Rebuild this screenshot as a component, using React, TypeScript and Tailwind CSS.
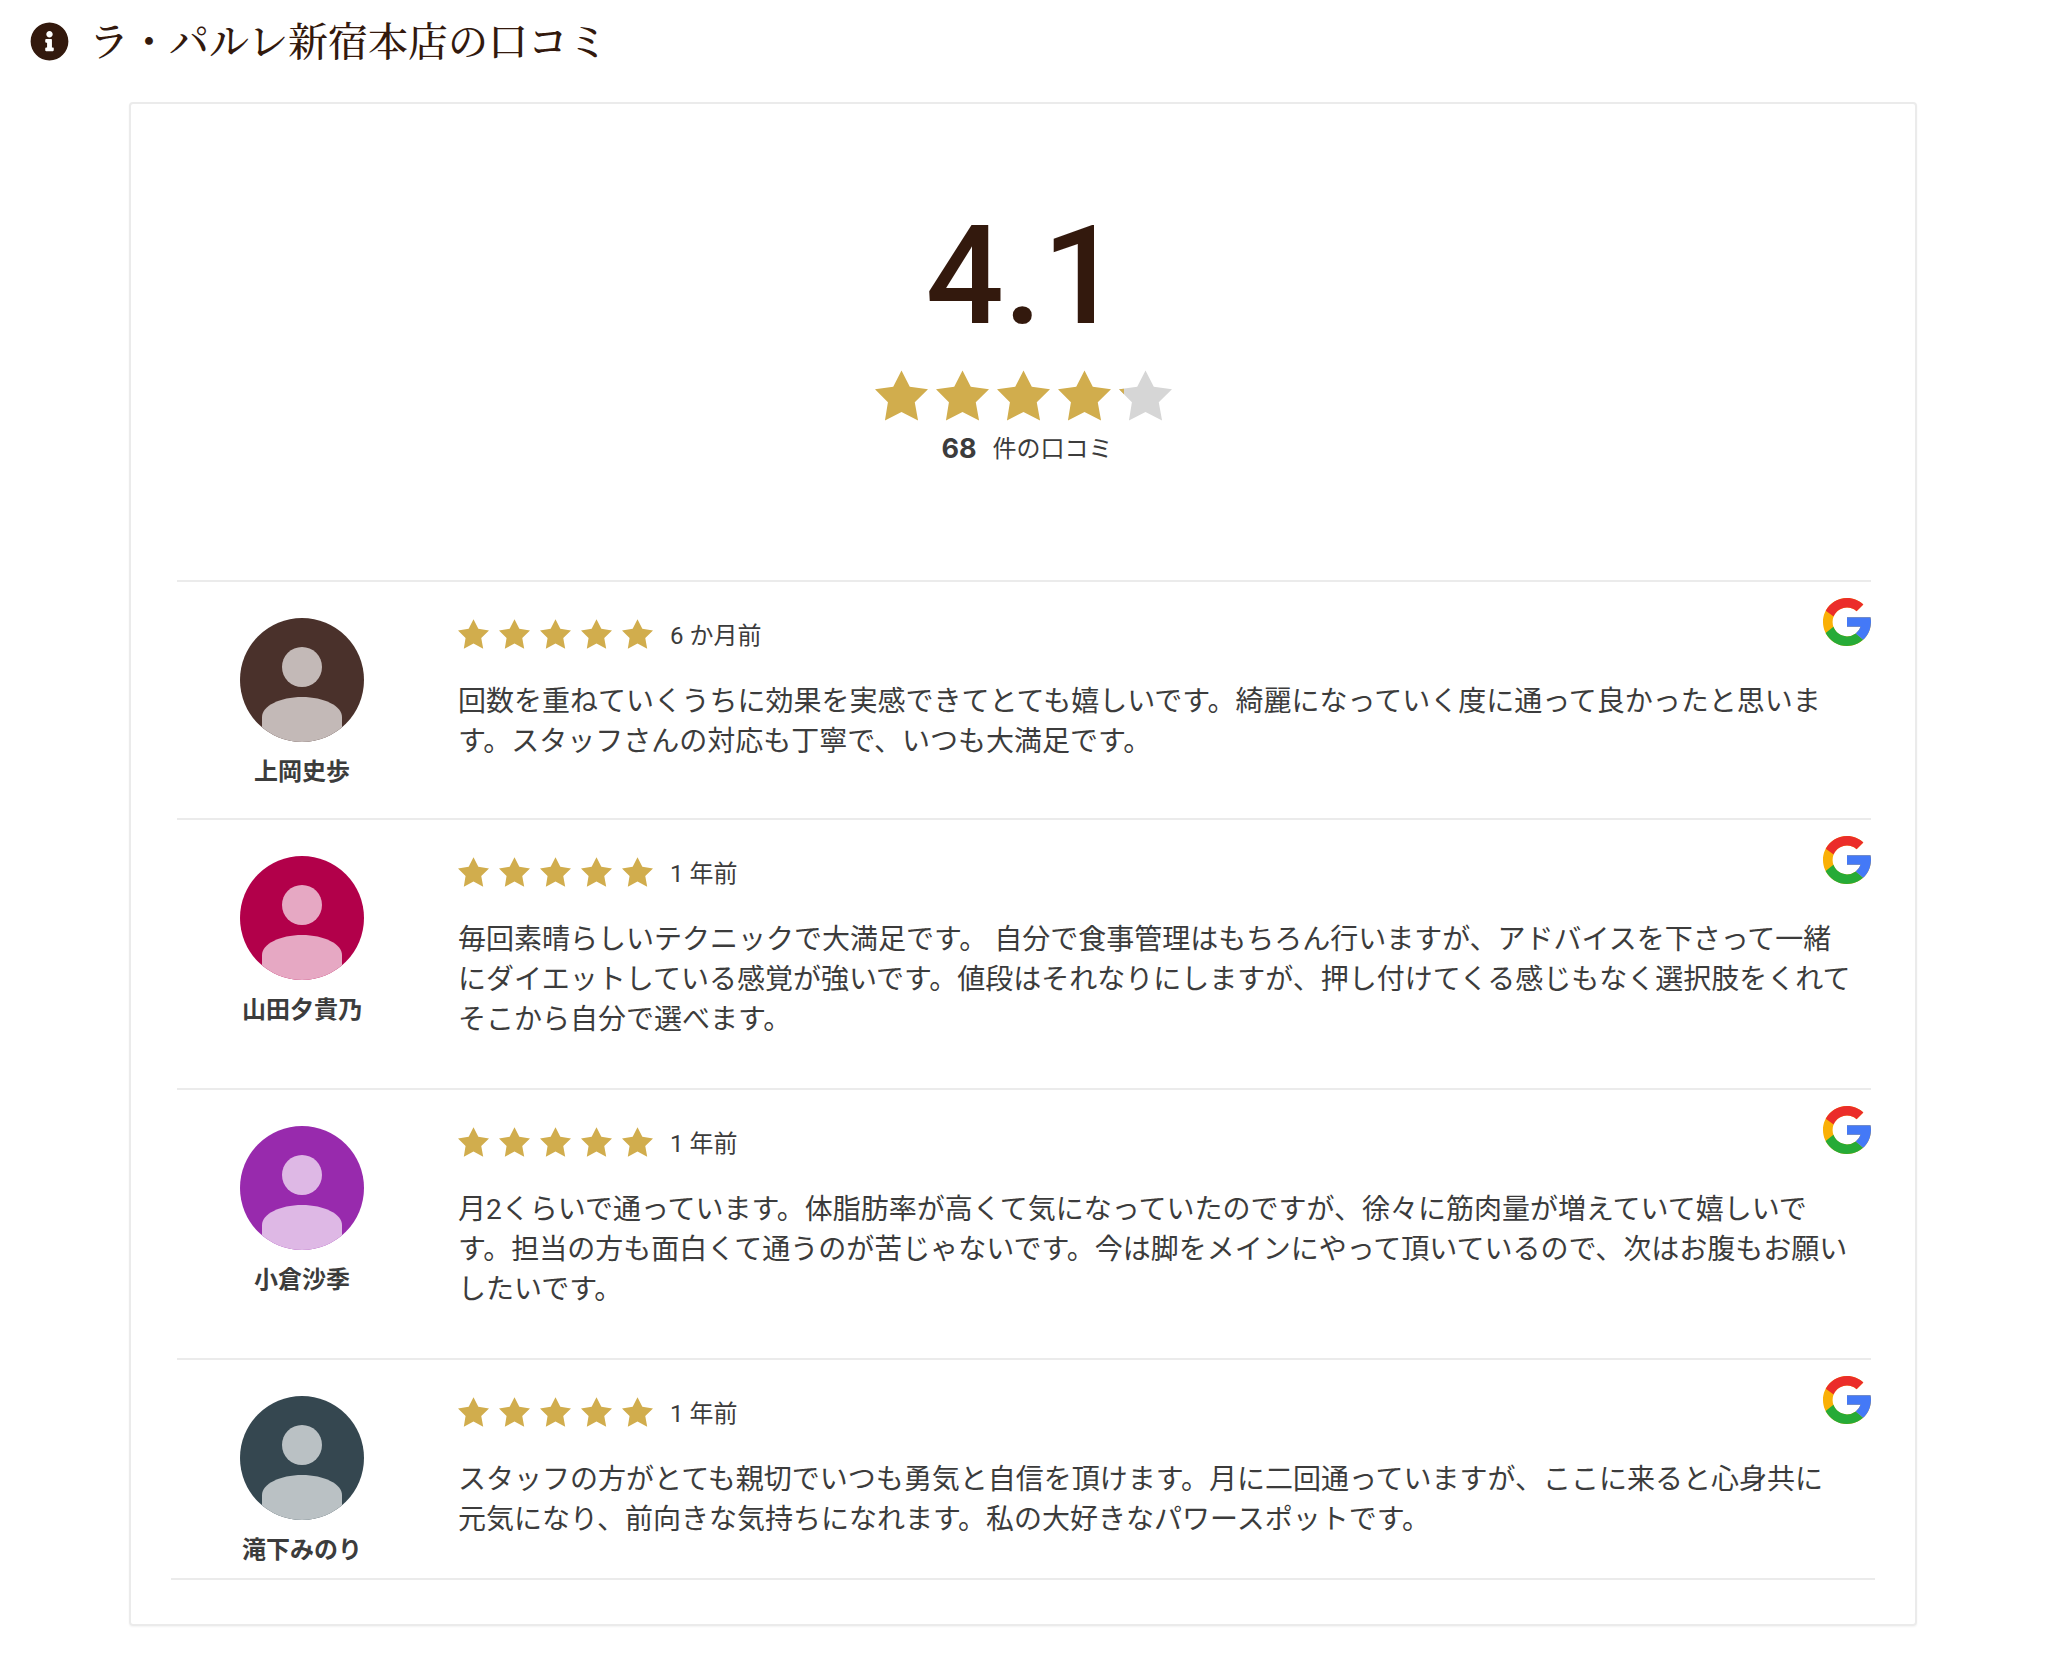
import { FaInfoCircle } from "react-icons/fa";

type Review = {
  name: string;
  time: string;
  text: string;
  background: string;
  figure: string;
};

const reviews: Review[] = [
  {
    name: "上岡史歩",
    time: "6 か月前",
    text: "回数を重ねていくうちに効果を実感できてとても嬉しいです。綺麗になっていく度に通って良かったと思いま\nす。スタッフさんの対応も丁寧で、いつも大満足です。",
    background: "text-[#4a312b]",
    figure: "fill-[#c3b9b7]",
  },
  {
    name: "山田夕貴乃",
    time: "1 年前",
    text: "毎回素晴らしいテクニックで大満足です。 自分で食事管理はもちろん行いますが、アドバイスを下さって一緒\nにダイエットしている感覚が強いです。値段はそれなりにしますが、押し付けてくる感じもなく選択肢をくれて\nそこから自分で選べます。",
    background: "text-[#b2004a]",
    figure: "fill-[#e6a8c3]",
  },
  {
    name: "小倉沙季",
    time: "1 年前",
    text: "月2くらいで通っています。体脂肪率が高くて気になっていたのですが、徐々に筋肉量が増えていて嬉しいで\nす。担当の方も面白くて通うのが苦じゃないです。今は脚をメインにやって頂いているので、次はお腹もお願い\nしたいです。",
    background: "text-[#982aad]",
    figure: "fill-[#deb8e5]",
  },
  {
    name: "滝下みのり",
    time: "1 年前",
    text: "スタッフの方がとても親切でいつも勇気と自信を頂けます。月に二回通っていますが、ここに来ると心身共に\n元気になり、前向きな気持ちになれます。私の大好きなパワースポットです。",
    background: "text-[#354750]",
    figure: "fill-[#bac1c4]",
  },
];

const STAR_POINTS =
  "80,0 105,49 160,57 120,96 130,151 80,125 30,151 39,96 0,57 55,49";

function Star({ className }: { className: string }) {
  return (
    <svg viewBox="0 0 160 151" className={className} aria-hidden="true">
      <polygon points={STAR_POINTS} fill="currentColor" />
    </svg>
  );
}

function PartialStar({ className }: { className: string }) {
  return (
    <svg viewBox="0 0 160 151" className={className} aria-hidden="true">
      <clipPath id="partial-star">
        <rect width="15" height="151" />
      </clipPath>
      <polygon points={STAR_POINTS} fill="#d6d6d6" />
      <polygon points={STAR_POINTS} fill="currentColor" clipPath="url(#partial-star)" />
    </svg>
  );
}

function GoogleLogo() {
  return (
    <svg viewBox="4 4 40 40" className="size-12" role="img" aria-label="Google">
      <path fill="#fab006" d="M43.611 20.083H42V20H24v8h11.303c-1.649 4.657-6.08 8-11.303 8-6.627 0-12-5.373-12-12s5.373-12 12-12c3.059 0 5.842 1.154 7.961 3.039l5.657-5.657C34.046 6.053 29.268 4 24 4 12.955 4 4 12.955 4 24s8.955 20 20 20 20-8.955 20-20c0-1.341-.138-2.65-.389-3.917z" />
      <path fill="#eb2d2a" d="m6.306 14.691 6.571 4.819C14.655 15.108 18.961 12 24 12c3.059 0 5.842 1.154 7.961 3.039l5.657-5.657C34.046 6.053 29.268 4 24 4 16.318 4 9.656 8.337 6.306 14.691z" />
      <path fill="#27ab37" d="M24 44c5.166 0 9.86-1.977 13.409-5.192l-6.19-5.238A11.91 11.91 0 0 1 24 36c-5.202 0-9.619-3.317-11.283-7.946l-6.522 5.025C9.505 39.556 16.227 44 24 44z" />
      <path fill="#4479f7" d="M43.611 20.083H42V20H24v8h11.303a12.04 12.04 0 0 1-4.087 5.571l.003-.002 6.19 5.238C36.971 39.205 44 34 44 24c0-1.341-.138-2.65-.389-3.917z" />
    </svg>
  );
}

function Avatar({ review }: { review: Review }) {
  return (
    <svg
      viewBox="0 0 124 124"
      className={`size-[124px] rounded-full ${review.background}`}
      role="img"
      aria-label={review.name}
    >
      <rect width="124" height="124" fill="currentColor" />
      <g className={review.figure}>
        <circle cx="62" cy="49" r="20" />
        <path d="M22 124V99C22 88 40 79 62 79s40 9 40 20v25z" />
      </g>
    </svg>
  );
}

function ReviewItem({ review }: { review: Review }) {
  return (
    <li className="group ml-1.5 mr-1 flex border-t-2 border-[#ebebeb]">
      <div className="flex w-[250px] shrink-0 flex-col items-center pb-7 pt-9 group-last:pb-2.5">
        <Avatar review={review} />
        <p className="mt-3 text-2xl leading-9 font-bold">{review.name}</p>
      </div>
      <div className="min-w-0 flex-1 pb-12 pl-[31px] pt-[33px] group-last:pb-0">
        <div className="flex items-start gap-[17px]">
          <div className="flex gap-2.5 pt-1 text-[#d1ad4d]" role="img" aria-label="5つ星のうち5">
            {[1, 2, 3, 4, 5].map((n) => (
              <Star key={n} className="h-[30px] w-[31px]" />
            ))}
          </div>
          <span className="text-2xl leading-[42px]">{review.time}</span>
        </div>
        <p className="mt-[25px] mr-2 text-[28px] leading-10 whitespace-pre-line">{review.text}</p>
      </div>
      <div className="w-0 pt-4">
        <div className="-ml-12 w-12">
          <GoogleLogo />
        </div>
      </div>
    </li>
  );
}

export default function App() {
  return (
    <main
      lang="ja"
      className="min-h-screen bg-white pb-10 font-['Roboto','Noto_Sans_CJK_JP',sans-serif] text-[#3c3c3c]"
    >
      <h1 className="flex items-start gap-5 px-[30px] pt-3 font-['Hiragino_Mincho_ProN','Noto_Serif_CJK_JP','Noto_Sans_CJK_JP',serif] text-[40px] leading-[54px] font-medium text-[#33190d]">
        <FaInfoCircle className="mt-2.5 size-[39px]" aria-hidden="true" />
        ラ・パルレ新宿本店の口コミ
      </h1>
      <section className="mt-9 mr-[131px] ml-[129px] rounded border-2 border-[#ebebeb] px-10 pb-11 shadow-xs">
        <div className="flex flex-col items-center pb-[111px] pt-[104px]">
          <p className="text-[138px] leading-[136px] font-medium text-[#33190d]">4.1</p>
          <div className="mt-[26px] flex gap-2 text-[#d1ad4d]" role="img" aria-label="5つ星のうち4.1">
            {[1, 2, 3, 4].map((n) => (
              <Star key={n} className="h-[51px] w-[53px]" />
            ))}
            <PartialStar className="h-[51px] w-[53px]" />
          </div>
          <p className="mt-2 flex items-center gap-4 pl-2 text-2xl leading-10">
            <strong className="font-['Inter',sans-serif] text-[27px]">68</strong>
            件の口コミ
          </p>
        </div>
        <ul className="border-b-2 border-[#ebebeb]">
          {reviews.map((review) => (
            <ReviewItem key={review.name} review={review} />
          ))}
        </ul>
      </section>
    </main>
  );
}
